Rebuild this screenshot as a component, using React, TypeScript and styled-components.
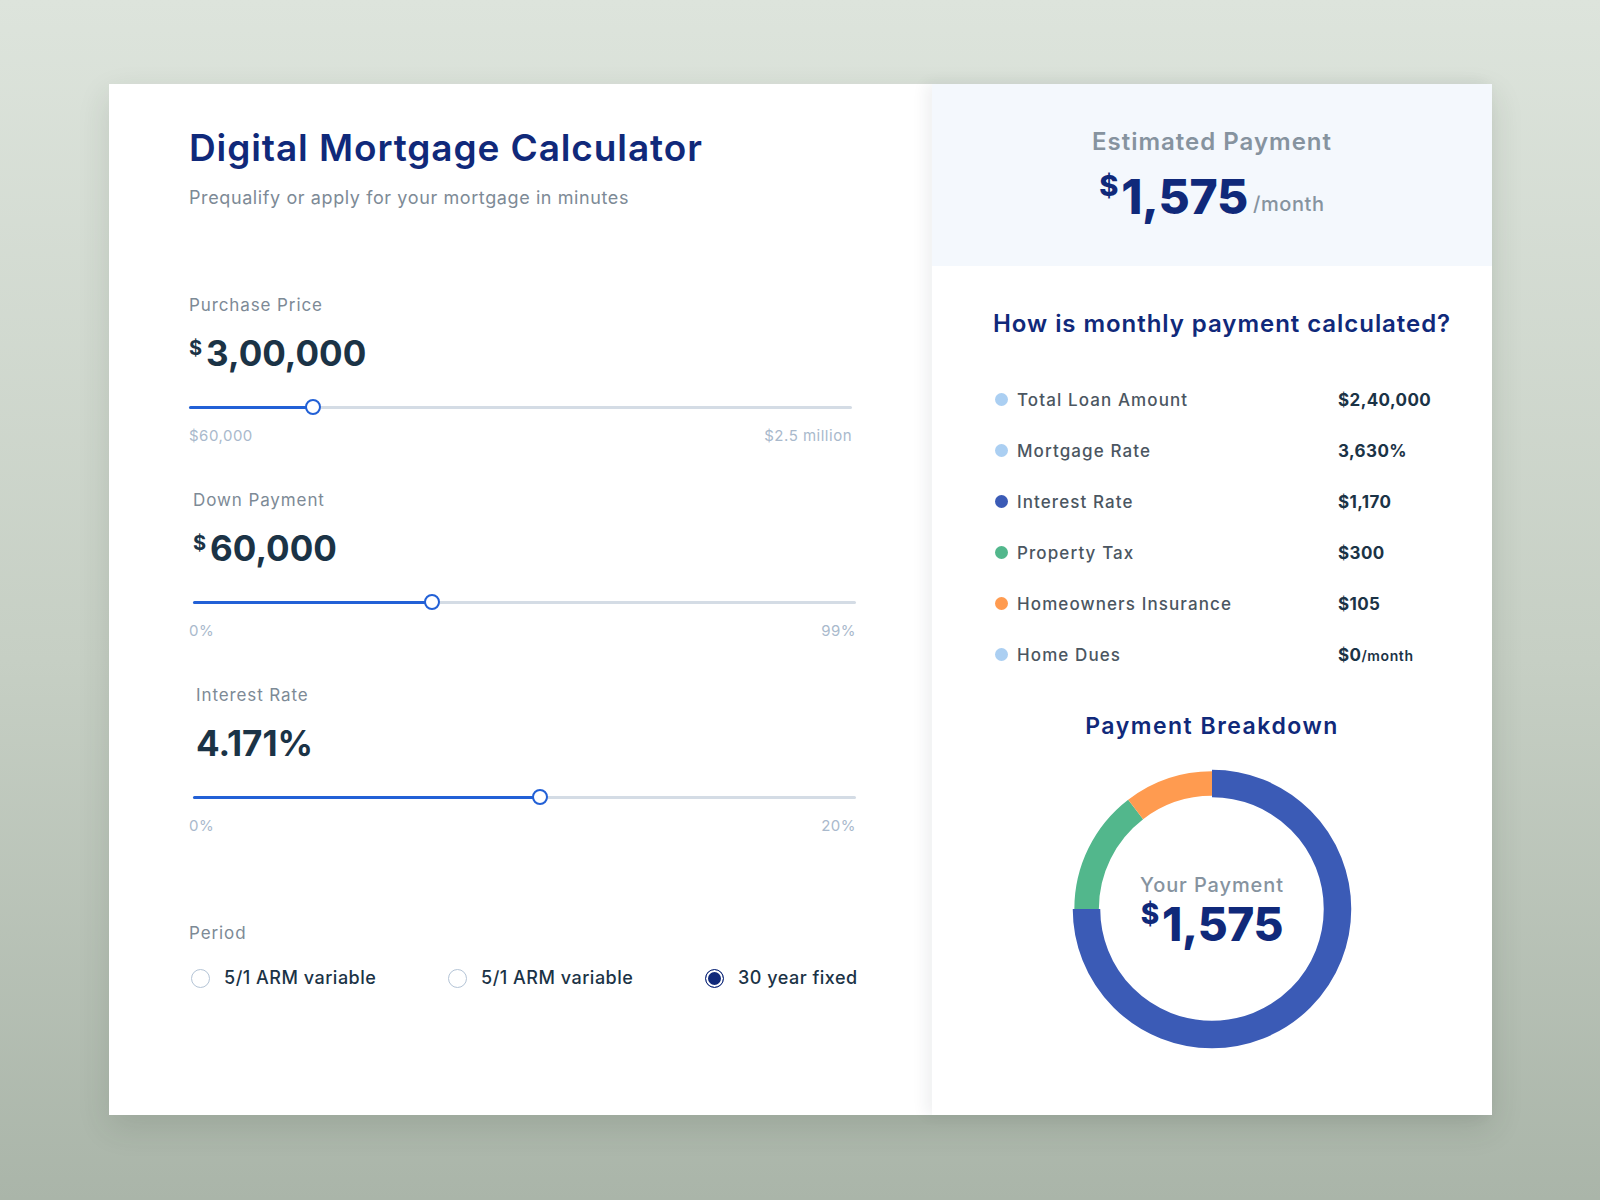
import { FC } from 'react';
import styled, { createGlobalStyle } from 'styled-components';

const Colors = {
  navy: '#10297a',
  ink: '#1b3346',
  gray: '#7d8a96',
  text: '#4b5661',
  light: '#a9b9cc',
  blue: '#2260d6',
  track: '#d4dce5',
  donutBlue: '#3b5bb6',
  green: '#52b78c',
  orange: '#ff9b50',
  sky: '#abcff2',
};

const GlobalStyle = createGlobalStyle`
  html, body {
    margin: 0;
    padding: 0;
  }
  body {
    min-height: 1200px;
    background: linear-gradient(180deg, #dde4dc 0%, #c6cfc4 55%, #aab5a9 100%);
    font-family: Inter, 'Open Sans', 'Liberation Sans', sans-serif;
    -webkit-font-smoothing: antialiased;
  }
`;

type SliderData = {
  label: string;
  currency?: boolean;
  value: string;
  min: string;
  max: string;
  percent: number;
  shift: number;
  trackShift: number;
};

const sliders: SliderData[] = [
  { label: 'Purchase Price', currency: true, value: '3,00,000', min: '$60,000', max: '$2.5 million', percent: 18.7, shift: 0, trackShift: 0 },
  { label: 'Down Payment', currency: true, value: '60,000', min: '0%', max: '99%', percent: 36, shift: 4, trackShift: 4 },
  { label: 'Interest Rate', value: '4.171%', min: '0%', max: '20%', percent: 52.3, shift: 7, trackShift: 4 },
];

const rows = [
  { color: Colors.sky, label: 'Total Loan Amount', value: '$2,40,000' },
  { color: Colors.sky, label: 'Mortgage Rate', value: '3,630%' },
  { color: Colors.donutBlue, label: 'Interest Rate', value: '$1,170' },
  { color: Colors.green, label: 'Property Tax', value: '$300' },
  { color: Colors.orange, label: 'Homeowners Insurance', value: '$105' },
  { color: Colors.sky, label: 'Home Dues', value: '$0', unit: '/month' },
];

const periods = [
  { label: '5/1 ARM variable', checked: false },
  { label: '5/1 ARM variable', checked: false },
  { label: '30 year fixed', checked: true },
];

const Slider: FC<{ data: SliderData }> = ({ data }) => (
  <StyledSection>
    <FieldLabel $shift={data.shift}>{data.label}</FieldLabel>
    <Amount $shift={data.shift}>
      {data.currency && <sup>$</sup>}
      <span>{data.value}</span>
    </Amount>
    <Track $shift={data.trackShift}>
      <div className="fill" style={{ width: `${data.percent}%` }} />
      <div className="thumb" style={{ left: `${data.percent}%` }} />
    </Track>
    <Range $width={663 + data.trackShift}>
      <span>{data.min}</span>
      <span>{data.max}</span>
    </Range>
  </StyledSection>
);

// arcs, clockwise from 12 o'clock
const polar = (r: number, deg: number) => {
  const a = (deg * Math.PI) / 180;
  return `${(145 + r * Math.sin(a)).toFixed(2)} ${(145 - r * Math.cos(a)).toFixed(2)}`;
};
const arc = (r: number, from: number, to: number) =>
  `M ${polar(r, from)} A ${r} ${r} 0 ${to - from > 180 ? 1 : 0} 1 ${polar(r, to)}`;

const Donut: FC = () => (
  <StyledDonut>
    <svg width="290" height="290" viewBox="0 0 290 290">
      <path d={arc(125.4, 270, 322.5)} fill="none" stroke={Colors.green} strokeWidth="24.5" />
      <path d={arc(125.4, 322.5, 360)} fill="none" stroke={Colors.orange} strokeWidth="24.5" />
      <path d={arc(125.5, 0, 270)} fill="none" stroke={Colors.donutBlue} strokeWidth="27.5" />
    </svg>
    <div className="center">
      <span className="caption">Your Payment</span>
      <BigPrice $size={46}>
        <sup>$</sup>1,575
      </BigPrice>
    </div>
  </StyledDonut>
);

export default function App() {
  return (
    <>
      <GlobalStyle />
      <Page>
        <Card>
          <LeftPanel>
            <Title>Digital Mortgage Calculator</Title>
            <Subtitle>Prequalify or apply for your mortgage in minutes</Subtitle>
            <Sliders>
              {sliders.map((s) => (
                <Slider key={s.label} data={s} />
              ))}
            </Sliders>
            <Period>
              <FieldLabel $shift={0}>Period</FieldLabel>
              <div className="options">
                {periods.map((p, i) => (
                  <RadioOption key={i}>
                    <Radio $checked={p.checked} />
                    <span>{p.label}</span>
                  </RadioOption>
                ))}
              </div>
            </Period>
          </LeftPanel>

          <RightPanel>
            <Estimate>
              <span className="title">Estimated Payment</span>
              <div className="amount">
                <BigPrice $size={48}>
                  <sup>$</sup>1,575
                </BigPrice>
                <span className="unit">/month</span>
              </div>
            </Estimate>

            <Breakdown>
              <h2>How is monthly payment calculated?</h2>
              <List>
                {rows.map((r) => (
                  <Row key={r.label} $dot={r.color}>
                    <i />
                    <span className="label">{r.label}</span>
                    <span className="value">
                      {r.value}
                      {r.unit && <small>{r.unit}</small>}
                    </span>
                  </Row>
                ))}
              </List>
              <h3>Payment Breakdown</h3>
              <Donut />
            </Breakdown>
          </RightPanel>
        </Card>
      </Page>
    </>
  );
}

const Page = styled.div`
  padding: 84px 0 0 109px;
`;

const Card = styled.div`
  display: flex;
  width: 1383px;
  height: 1031px;
  background: #fff;
  box-shadow: 0 12px 30px rgba(40, 60, 40, 0.14);
`;

const LeftPanel = styled.div`
  width: 823px;
  box-sizing: border-box;
  padding: 42px 0 0 80px;
  display: flex;
  flex-direction: column;
`;

const Title = styled.h1`
  margin: 0;
  font-size: 37px;
  line-height: 44px;
  font-weight: 600;
  color: ${Colors.navy};
  letter-spacing: 0.9px;
`;

const Subtitle = styled.p`
  margin: 15px 0 0;
  font-size: 18px;
  line-height: 26px;
  color: ${Colors.gray};
  letter-spacing: 0.6px;
`;

const Sliders = styled.div`
  margin-top: 82px;
  display: flex;
  flex-direction: column;
  gap: 42px;
`;

const StyledSection = styled.div`
  display: flex;
  flex-direction: column;
`;

const FieldLabel = styled.div<{ $shift: number }>`
  padding-left: ${(p) => p.$shift}px;
  font-size: 17px;
  line-height: 24px;
  color: ${Colors.gray};
  letter-spacing: 0.9px;
`;

const Amount = styled.div<{ $shift: number }>`
  margin-top: 14px;
  padding-left: ${(p) => p.$shift}px;
  display: flex;
  align-items: flex-start;
  height: 44px;
  color: ${Colors.ink};
  font-weight: 700;

  > sup {
    font-size: 20px;
    line-height: 24px;
    margin: 5px 4px 0 0;
  }
  > span {
    font-size: 35px;
    line-height: 44px;
  }
`;

const Track = styled.div<{ $shift: number }>`
  position: relative;
  margin: 24px 0 0 ${(p) => p.$shift}px;
  width: 663px;
  height: 16px;

  &::before {
    content: '';
    position: absolute;
    left: 0;
    right: 0;
    top: 7px;
    height: 3px;
    border-radius: 2px;
    background: ${Colors.track};
  }
  > .fill {
    position: absolute;
    left: 0;
    top: 7px;
    height: 3px;
    border-radius: 2px;
    background: ${Colors.blue};
  }
  > .thumb {
    position: absolute;
    top: 0;
    width: 16px;
    height: 16px;
    box-sizing: border-box;
    margin-left: -8px;
    border-radius: 50%;
    border: 2px solid ${Colors.blue};
    background: #fff;
  }
`;

const Range = styled.div<{ $width: number }>`
  margin-top: 11px;
  width: ${(p) => p.$width}px;
  display: flex;
  justify-content: space-between;
  font-size: 15px;
  line-height: 20px;
  color: ${Colors.light};
  letter-spacing: 0.5px;
`;

const Period = styled.div`
  margin-top: 85px;
  display: flex;
  flex-direction: column;

  > .options {
    margin-top: 21px;
    padding-left: 2px;
    display: grid;
    grid-template-columns: 257px 257px auto;
  }
`;

const RadioOption = styled.label`
  display: flex;
  align-items: center;
  gap: 14px;
  font-size: 18px;
  line-height: 24px;
  font-weight: 500;
  color: ${Colors.ink};
  letter-spacing: 0.5px;
`;

const Radio = styled.span<{ $checked: boolean }>`
  width: 19px;
  height: 19px;
  box-sizing: border-box;
  border-radius: 50%;
  border: 1.5px solid ${(p) => (p.$checked ? Colors.navy : '#b4c4d6')};
  background: ${(p) => (p.$checked ? Colors.navy : '#fff')};
  box-shadow: ${(p) => (p.$checked ? 'inset 0 0 0 2px #fff' : 'none')};
`;

const RightPanel = styled.div`
  position: relative;
  z-index: 1;
  width: 560px;
  display: flex;
  flex-direction: column;
  background: #fff;
  box-shadow: -6px 0 14px rgba(30, 40, 60, 0.07);
`;

const Estimate = styled.div`
  height: 182px;
  box-sizing: border-box;
  padding-top: 42px;
  background: #f4f8fd;
  display: flex;
  flex-direction: column;
  align-items: center;

  > .title {
    font-size: 24px;
    line-height: 32px;
    font-weight: 600;
    color: #86939f;
    letter-spacing: 1px;
  }
  > .amount {
    margin-top: 11px;
    display: flex;
    align-items: flex-end;
    gap: 5px;
  }
  > .amount > .unit {
    font-size: 20px;
    line-height: 30px;
    font-weight: 500;
    color: #86939f;
    padding-bottom: 6px;
    letter-spacing: 0.6px;
  }
`;

const BigPrice = styled.div<{ $size: number }>`
  display: flex;
  align-items: flex-start;
  font-size: ${(p) => p.$size}px;
  line-height: ${(p) => Math.round(p.$size * 1.16)}px;
  font-weight: 800;
  color: ${Colors.navy};
  letter-spacing: -0.3px;

  > sup {
    font-size: ${(p) => Math.round(p.$size * 0.6)}px;
    line-height: ${(p) => Math.round(p.$size * 0.7)}px;
    margin-right: 3px;
  }
`;

const Breakdown = styled.div`
  display: flex;
  flex-direction: column;
  padding-top: 42px;

  > h2 {
    margin: 0 0 0 61px;
    font-size: 24px;
    line-height: 32px;
    font-weight: 600;
    color: ${Colors.navy};
    letter-spacing: 0.95px;
  }
  > h3 {
    margin: 31px 0 0;
    text-align: center;
    font-size: 23px;
    line-height: 30px;
    font-weight: 600;
    color: ${Colors.navy};
    letter-spacing: 1.5px;
  }
`;

const List = styled.div`
  margin-top: 34px;
  padding-left: 63px;
  display: flex;
  flex-direction: column;
`;

const Row = styled.div<{ $dot: string }>`
  display: grid;
  grid-template-columns: 22px 321px auto;
  align-items: center;
  height: 51px;

  > i {
    width: 13px;
    height: 13px;
    border-radius: 50%;
    background: ${(p) => p.$dot};
  }
  > .label {
    font-size: 17px;
    font-weight: 500;
    color: ${Colors.text};
    letter-spacing: 1.1px;
  }
  > .value {
    font-size: 17px;
    font-weight: 700;
    color: ${Colors.ink};
    letter-spacing: 0.4px;
  }
  > .value > small {
    font-size: 14px;
    font-weight: 600;
    letter-spacing: 0.6px;
  }
`;

const StyledDonut = styled.div`
  position: relative;
  margin: 23px auto 0;
  width: 290px;
  height: 290px;

  > svg {
    display: block;
  }
  > .center {
    position: absolute;
    inset: 0;
    display: flex;
    flex-direction: column;
    align-items: center;
    justify-content: center;
    padding-top: 4px;
  }
  > .center > .caption {
    font-size: 20px;
    line-height: 26px;
    font-weight: 500;
    color: #86939f;
    letter-spacing: 0.9px;
  }
`;
